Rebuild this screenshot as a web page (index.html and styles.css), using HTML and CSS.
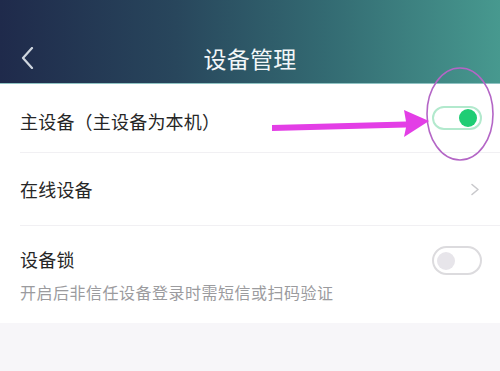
FILE: index.html
```html
<!DOCTYPE html>
<html lang="zh-CN">
<head>
<meta charset="utf-8">
<title>设备管理</title>
<link rel="stylesheet" href="styles.css">
</head>
<body>
<div class="page">
  <header class="header">
    <div class="status"></div>
    <div class="nav">
      <svg class="back" width="14" height="22" viewBox="0 0 14 22"><path d="M11 1 L2 11 L11 21" fill="none" stroke="#cfd6df" stroke-width="2.2" stroke-linecap="round" stroke-linejoin="round"/></svg>
      <h1 class="title">设备管理</h1>
    </div>
  </header>
  <section class="list">
    <div class="row row-main">
      <span class="label">主设备（主设备为本机）</span>
      <span class="toggle on"><span class="knob"></span></span>
    </div>
    <div class="divider"></div>
    <div class="row row-online">
      <span class="label">在线设备</span>
      <svg class="chev" width="10" height="13" viewBox="0 0 10 13"><path d="M2 1.5 L8 6.5 L2 11.5" fill="none" stroke="#c9c9cc" stroke-width="1.6" stroke-linecap="round" stroke-linejoin="round"/></svg>
    </div>
    <div class="divider"></div>
    <div class="row row-lock">
      <div class="lock-text">
        <span class="label">设备锁</span>
        <span class="sub">开启后非信任设备登录时需短信或扫码验证</span>
      </div>
      <span class="toggle off"><span class="knob"></span></span>
    </div>
  </section>
  <svg class="annot" width="500" height="371" viewBox="0 0 500 371">
    <ellipse cx="460" cy="114" rx="33" ry="46" fill="none" stroke="#b466c6" stroke-width="1.6"/>
    <polygon points="272,125 406,121.5 404,110 429,121 404,137 406,127.5 272,131" fill="#e33ee6"/>
  </svg>
</div>
</body>
</html>
```
FILE: styles.css
```css
* { box-sizing: border-box; }
html, body { margin: 0; padding: 0; }
body {
  width: 500px;
  height: 371px;
  overflow: hidden;
  background: #f7f6f9;
  font-family: "Noto Sans CJK SC", "Noto Sans", sans-serif;
}
.page { position: relative; width: 500px; height: 371px; }
.header {
  height: 84px;
  background: linear-gradient(90deg, #1f2a4b 0%, #28465c 35%, #336a72 65%, #47998f 100%);
  border-bottom: 1px solid #8fc3c3;
}
.status { height: 32px; }
.nav {
  height: 51px;
  display: flex;
  align-items: center;
  justify-content: center;
  position: relative;
}
.back { position: absolute; left: 21px; top: 15px; }
.title {
  margin: 0;
  font-size: 23px;
  font-weight: 400;
  color: #f2f6f8;
  letter-spacing: 0.3px;
  line-height: 30px;
}
.list { background: #fff; }
.row {
  display: flex;
  align-items: center;
  justify-content: space-between;
  padding: 0 18px 0 20px;
}
.row-main { height: 68px; padding-top: 2px; }
.row-online { height: 72px; }
.row-lock { height: 97px; align-items: flex-start; padding-top: 21px; }
.label {
  font-size: 18px;
  color: #262626;
  line-height: 24px;
  letter-spacing: 0.2px;
}
.row-main .label { margin-top: 4px; }
.divider { height: 1px; margin-left: 20px; background: #f1f0f3; }
.lock-text { display: flex; flex-direction: column; gap: 10px; }
.sub {
  font-size: 16px;
  color: #9b9b9e;
  letter-spacing: 0.5px;
  line-height: 22px;
}
.toggle {
  display: flex;
  align-items: center;
  width: 50px;
  border-radius: 15px;
  border: 2px solid #ddd;
}
.toggle .knob { width: 18px; height: 18px; border-radius: 50%; }
.toggle.on {
  height: 24px;
  border-color: #b2e9cd;
  justify-content: flex-end;
  padding-right: 3px;
  margin-top: -2px;
}
.toggle.on .knob { background: #1fcd74; }
.toggle.off {
  height: 29px;
  border-color: #dcdbde;
  padding-left: 3px;
  margin-top: -1px;
}
.toggle.off .knob { background: #e7e5ea; }
.chev { margin-right: 2px; }
.annot { position: absolute; left: 0; top: 0; pointer-events: none; }
```
